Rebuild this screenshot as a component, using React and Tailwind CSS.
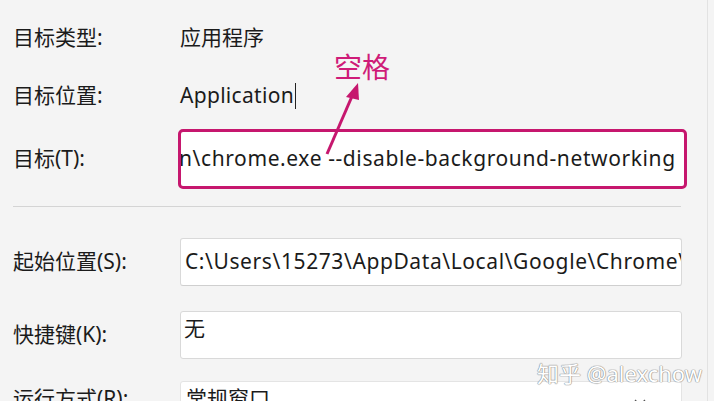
import React from 'react';

const cjk = { fontFamily: '"Noto Sans", "Noto Sans CJK SC", sans-serif' };

const Label = ({ children }) => (
  <div className="w-[180px] shrink-0 pl-[13px] text-[21px] text-[#1b1b1b]">{children}</div>
);

const Field = ({ children, className = '' }) => (
  <div className={`w-[502px] bg-white border border-[#d9d9d9] rounded-[3px] overflow-hidden ${className}`}>
    {children}
  </div>
);

const App = () => {
  return (
    <div className="relative w-[714px] h-[401px] overflow-hidden bg-[#f4f4f4] flex" style={cjk}>
      {/* property sheet body */}
      <div className="w-[708px] h-full shrink-0 border-r border-[#e2e2e2] flex flex-col">
        <div className="flex shrink-0 items-center h-[48px] mt-[14px]">
          <Label>目标类型:</Label>
          <div className="text-[21px] text-[#1b1b1b]">应用程序</div>
        </div>

        <div className="flex shrink-0 items-center h-[48px] mt-[10px]">
          <Label>目标位置:</Label>
          <div className="flex items-center text-[21px] tracking-[0.3px] text-[#1b1b1b]">
            Application
            <span className="w-px h-[26px] bg-[#222] ml-[1px]" />
          </div>
        </div>

        <div className="flex shrink-0 items-center h-[60px] mt-[9px]">
          <Label>目标(T):</Label>
          <div className="-ml-[2px] w-[509px] h-[60px] border-[3px] border-[#c6176e] rounded-[5px] bg-white overflow-hidden flex items-center">
            <div className="whitespace-nowrap text-[21px] text-[#1b1b1b] -ml-[2px] tracking-[0.6px]">
              n\chrome.exe --disable-background-networking
            </div>
          </div>
        </div>

        <div className="shrink-0 ml-[13px] mr-[26px] mt-[17px] h-px bg-[#d4d4d4]" />

        <div className="flex shrink-0 items-center h-[48px] mt-[31px]">
          <Label>起始位置(S):</Label>
          <Field className="h-[48px] flex items-center border-b-[#cfcfcf]">
            <div className="whitespace-nowrap text-[21px] tracking-[0.6px] text-[#1b1b1b] pl-[4px]">
              C:\Users\15273\AppData\Local\Google\Chrome\Application
            </div>
          </Field>
        </div>

        <div className="flex shrink-0 items-center h-[48px] mt-[25px]">
          <Label>快捷键(K):</Label>
          <Field className="h-[48px] border-[#bdbdbd]">
            <div className="text-[21px] text-[#1b1b1b] pl-[3px] pt-[1px]">无</div>
          </Field>
        </div>

        <div className="flex shrink-0 items-start h-[48px] mt-[22px]">
          <Label>
            <div className="pt-[2px]">运行方式(R):</div>
          </Label>
          <Field className="h-[48px] bg-[#fbfbfb] border-[#e4e4e4] flex justify-between pr-[34px]">
            <div className="text-[21px] text-[#1b1b1b] pl-[5px] pt-[1px]">常规窗口</div>
            <svg width="14" height="14" viewBox="0 0 14 14" className="mt-[14px]">
              <path d="M2 4l5 5 5-5" fill="none" stroke="#555" strokeWidth="1.3" />
            </svg>
          </Field>
        </div>
      </div>

      {/* annotation: points at the space before the switch */}
      <div className="absolute left-[334px] top-[46px] text-[28px] text-[#cf1b78]">空格</div>
      <svg className="absolute left-0 top-0" width="714" height="401">
        <line x1="327" y1="154" x2="353" y2="94" stroke="#c6176e" strokeWidth="3" />
        <polygon points="358,83 346,97 359,100" fill="#c6176e" />
      </svg>

      {/* watermark */}
      <div
        className="absolute left-[537px] top-[357px] text-[22px] text-white whitespace-nowrap"
        style={{ textShadow: '0 0 1px #8a8a8a, 0 0 1px #8a8a8a, 0 0 1px #8a8a8a' }}
      >
        知乎 @alexchow
      </div>
    </div>
  );
};

export default App;
